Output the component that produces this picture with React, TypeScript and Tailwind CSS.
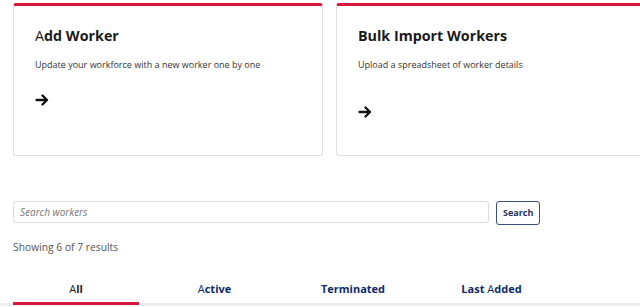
import React from "react";

const Arrow = () => (
  <svg width="14" height="12" viewBox="0 0 14 12" fill="none" stroke="#111" strokeWidth="2.3" strokeLinecap="round" strokeLinejoin="round">
    <path d="M1.5 6h10.5M7.5 1.5L12 6l-4.5 4.5" />
  </svg>
);

function Card({ title, desc, arrowClass }: { title: React.ReactNode; desc: string; arrowClass: string }) {
  return (
    <div className="w-[310px] shrink-0 h-[153px] bg-white border border-[#e2e2e2] border-t-[3px] border-t-[#d8173c] rounded-[3px] pl-[21px] pr-[20px]">
      <div className="pt-[18px] text-[14.3px] font-bold text-[#1b1b1b] leading-[24px]">{title}</div>
      <div className="mt-[10px] text-[9px] text-[#333] leading-[14px]">{desc}</div>
      <div className={arrowClass}>
        <Arrow />
      </div>
    </div>
  );
}

export default function App() {
  return (
    <div className="w-[640px] h-[307px] overflow-hidden bg-white" style={{ fontFamily: '"Open Sans", sans-serif' }}>
      <div className="flex gap-[13px] pl-[13px] pt-[3px]">
        <Card
          title={<><span className="font-normal">A</span>dd Worker</>}
          desc="Update your workforce with a new worker one by one"
          arrowClass="mt-[22px]"
        />
        <Card title="Bulk Import Workers" desc="Upload a spreadsheet of worker details" arrowClass="mt-[34px]" />
      </div>
      <div className="flex items-start gap-[7px] pl-[13px] mt-[45px]">
        <div className="w-[476px] h-[22px] border border-[#dcdcdc] rounded-[3px] flex items-center px-[6px]">
          <span className="text-[10px] italic text-[#777]">Search workers</span>
        </div>
        <button className="h-[24px] px-[6px] border border-[#3b4f7c] rounded-[3px] text-[9px] font-bold text-[#1f3160] bg-white">
          Search
        </button>
      </div>
      <div className="pl-[13px] mt-[15px] text-[10.3px] text-[#555] leading-[14px]">Showing 6 of 7 results</div>
      <div className="relative mt-[26px] h-[26px]">
        <div className="absolute left-0 right-0 bottom-0 h-[3px] bg-[#eeeeee]" />
        <div className="flex gap-[12.5px] pl-[13px] h-full leading-[15px]">
          <div className="relative w-[126px] flex items-start justify-center pt-[1px] text-[11px] font-bold text-[#222]">
            <span><span className="font-normal">A</span>ll</span>
            <div className="absolute left-0 right-0 bottom-[1px] h-[3px] bg-[#d8173c]" />
          </div>
          <div className="w-[126px] flex items-start justify-center pt-[1px] text-[11px] font-bold text-[#0e2b66]">
            <span><span className="font-normal">A</span>ctive</span>
          </div>
          <div className="w-[126px] flex items-start justify-center pt-[1px] text-[11px] font-bold text-[#0e2b66]">
            Terminated
          </div>
          <div className="w-[126px] flex items-start justify-center pt-[1px] text-[11px] font-bold text-[#0e2b66]">
            <span>Last <span className="font-normal">A</span>dded</span>
          </div>
        </div>
      </div>
    </div>
  );
}
